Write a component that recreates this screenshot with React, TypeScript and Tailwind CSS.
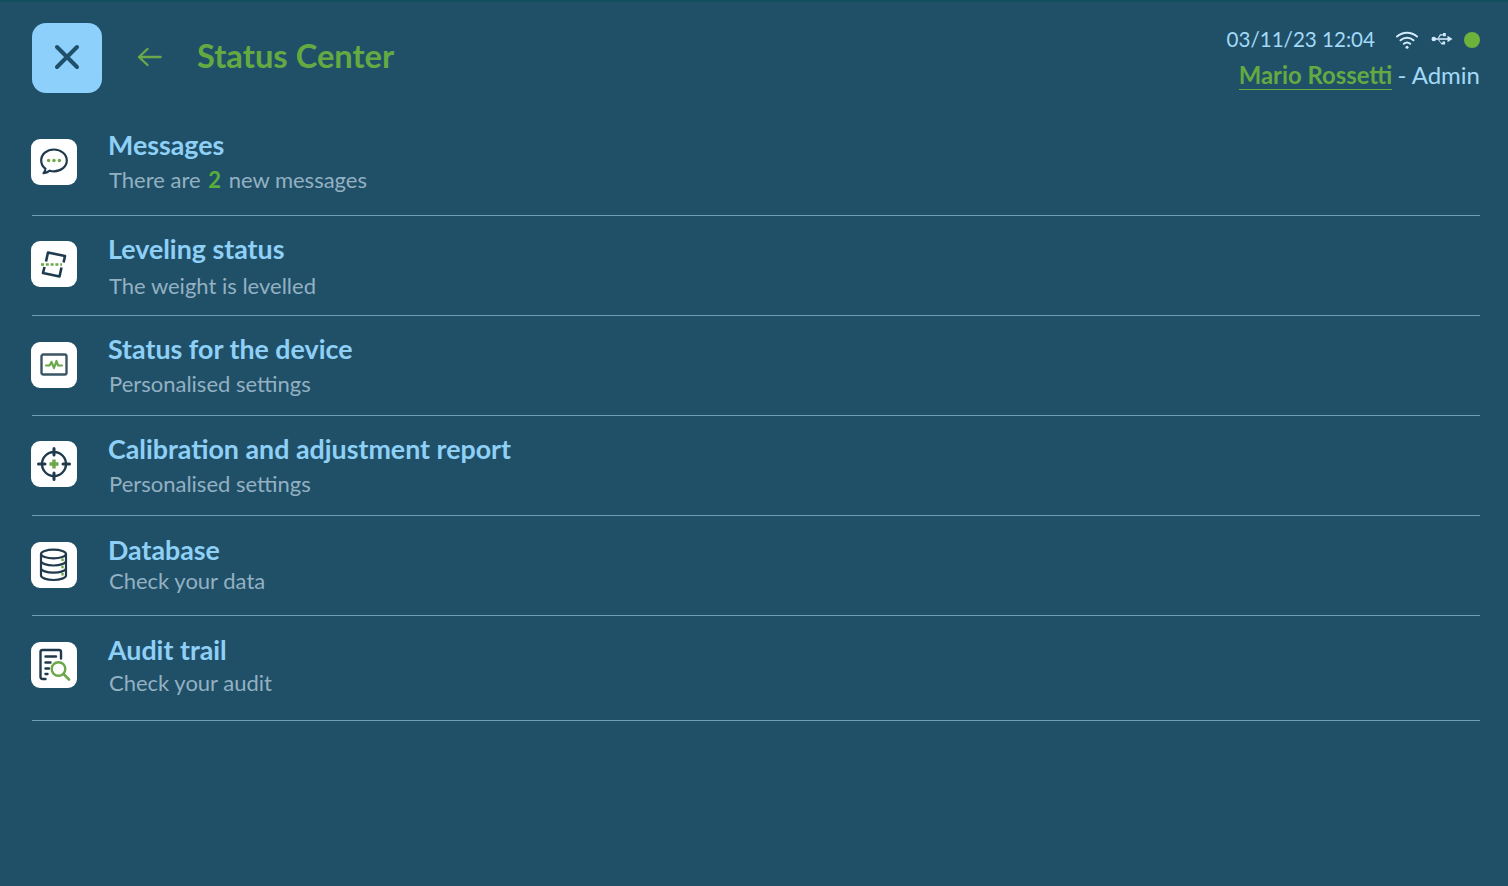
import React from 'react';

const LINE = '#1f3a4d';
const GREEN = '#6aa84a';

const IconChat = () => (
  <svg width="30" height="30" viewBox="0 0 30 30" fill="none">
    <path d="M15 2.500C7.800 2.500 2.200 7.300 2.200 13.500c0 3.300 1.600 6.200 4.200 8.200-.1 1.600-.8 3.200-1.900 4.500 2.500-.2 4.600-1.200 6.300-2.500 1.300.4 2.700.6 4.200.6 7.200 0 12.800-4.800 12.800-10.800S22.200 2.500 15 2.500z" stroke={LINE} strokeWidth="2.200" strokeLinejoin="round" />
    <circle cx="9.600" cy="13.500" r="1.700" fill={GREEN} />
    <circle cx="15" cy="13.500" r="1.700" fill={GREEN} />
    <circle cx="20.400" cy="13.500" r="1.700" fill={GREEN} />
  </svg>
);

const IconLevel = () => (
  <svg width="30" height="30" viewBox="0 0 30 30" fill="none">
    <path d="M7 12.500 9 3.500l17 3.500-1.400 6.500M5.500 18l-1.500 6 16.500 3.500 2-9" stroke={LINE} strokeWidth="2.600" strokeLinejoin="round" />
    <path d="M2 15.500h21" stroke={GREEN} strokeWidth="2.600" strokeDasharray="3 1.800" />
  </svg>
);

const IconMonitor = () => (
  <svg width="30" height="30" viewBox="0 0 30 30" fill="none">
    <rect x="2.500" y="4.500" width="25" height="20" rx="1.800" stroke="#3b5566" strokeWidth="2.400" />
    <path d="M7 15.500h3.500l2-3.500 2.500 6 2.500-7 1.500 4.500h4" stroke={GREEN} strokeWidth="2.200" strokeLinejoin="round" strokeLinecap="round" />
  </svg>
);

const IconTarget = () => (
  <svg width="36" height="36" viewBox="0 0 36 36" fill="none">
    <circle cx="18" cy="18" r="12" stroke={LINE} strokeWidth="2.400" />
    <path d="M18 2.500v6.500M18 27v6.500M2.500 18H9M27 18h6.500" stroke={LINE} strokeWidth="3" strokeLinecap="round" />
    <path d="M18 13.500v9M13.500 18h9" stroke={GREEN} strokeWidth="3.400" />
  </svg>
);

const IconDatabase = () => (
  <svg width="32" height="36" viewBox="0 0 32 36" fill="none">
    <ellipse cx="15.500" cy="7" rx="12.500" ry="4.300" stroke={LINE} strokeWidth="2.200" />
    <path d="M3 7v21.500c0 2.400 5.600 4.500 12.500 4.500S28 30.900 28 28.500V7M3 14c0 2.400 5.600 4.500 12.500 4.500S28 16.400 28 14M3 21.200c0 2.400 5.600 4.500 12.500 4.500S28 23.600 28 21.200" stroke={LINE} strokeWidth="2.200" />
    <path d="M24.500 11.500v2.500M24.500 18.700v2.500M24.500 26v2.500" stroke={GREEN} strokeWidth="2.400" />
  </svg>
);

const IconAudit = () => (
  <svg width="36" height="36" viewBox="0 0 36 36" fill="none">
    <path d="M9.500 32H6.500c-1.200 0-2-.8-2-2V5c0-1.200.8-2 2-2H23c1.200 0 2 .8 2 2v6.500" stroke={LINE} strokeWidth="2.400" strokeLinecap="round" />
    <path d="M9.500 9.500h10.500M9.500 15.500h5M9.500 21.500h3.500M9.500 27h2" stroke={LINE} strokeWidth="2.400" strokeLinecap="round" />
    <circle cx="22.500" cy="22" r="6.800" stroke={GREEN} strokeWidth="2.400" />
    <path d="m27.500 27 5.500 5.500" stroke={GREEN} strokeWidth="2.600" strokeLinecap="round" />
  </svg>
);

const IconWifi = () => (
  <svg width="24" height="20" viewBox="0 0 24 20" fill="none" stroke="#d3ecfb" strokeLinecap="round">
    <path d="M2 6.500c5.800-5 14.200-5 20 0" strokeWidth="2" />
    <path d="M5.500 10.300c3.800-3.300 9.200-3.300 13 0" strokeWidth="2" />
    <path d="M8.800 13.800c1.900-1.500 4.500-1.500 6.400 0" strokeWidth="2" />
    <circle cx="12" cy="17.300" r="1.500" fill="#d3ecfb" stroke="none" />
  </svg>
);

const IconUsb = () => (
  <svg width="22" height="14" viewBox="0 0 22 14" fill="#cfe9fa">
    <circle cx="2.800" cy="7" r="2.300" />
    <path d="M3 6.200h15v1.600H3z" />
    <path d="m16.500 3.800 5 3.200-5 3.200z" />
    <path d="M6.500 6.500 9 2.300h3V1h2.800v3.200H12V3.400H9.700L7.800 6.500zM8 7.500l2 3.200h1.500V9.500h2.600v3h-3.400L6.700 7.500z" />
  </svg>
);

interface RowProps {
  icon: React.ReactNode;
  title: string;
  sub: React.ReactNode;
  className: string;
  iconClass: string;
  textClass: string;
  subClass: string;
}

const Row: React.FC<RowProps> = ({ icon, title, sub, className, iconClass, textClass, subClass }) => (
  <div className={`flex items-start border-b border-[#6f9fb8] ${className}`}>
    <div className={`w-[46px] h-[46px] -ml-px bg-white rounded-[9px] flex items-center justify-center shrink-0 ${iconClass}`}>
      {icon}
    </div>
    <div className={`ml-[31px] ${textClass}`}>
      <div className="text-[26.800px] leading-[32px] font-bold text-[#8fd0f7]">{title}</div>
      <div className={`ml-px text-[22px] leading-[28px] text-[#93b1c2] ${subClass}`}>{sub}</div>
    </div>
  </div>
);

export default function App() {
  return (
    <div className="w-[1508px] h-[886px] bg-[#205068] overflow-hidden border-t-2 border-[#12505f]" style={{ fontFamily: "Lato, 'Open Sans', sans-serif" }}>
      <div className="px-[28px] pl-[32px]">
        {/* header */}
        <div className="flex items-start justify-between h-[114px]">
          <div className="flex items-center pt-[21px]">
            <div className="w-[70px] h-[70px] rounded-[14px] bg-[#8cd0fb] flex items-center justify-center">
              <svg className="mb-[2px]" width="26" height="26" viewBox="0 0 26 26" fill="none" stroke="#1f4f69" strokeWidth="4" strokeLinecap="round">
                <path d="M3 3l20 20M23 3 3 23" />
              </svg>
            </div>
            <svg className="ml-[35px] -mt-[2px]" width="25" height="20" viewBox="0 0 25 20" fill="none" stroke={GREEN} strokeWidth="2.400" strokeLinecap="round" strokeLinejoin="round">
              <path d="M23.500 10H2M10.500 2 2 10l8.500 8" />
            </svg>
            <div className="ml-[35px] text-[32.700px] leading-[40px] font-bold text-[#64aa42] -mt-[4px]">Status Center</div>
          </div>
          <div className="flex flex-col items-end pt-[23px]">
            <div className="flex items-center h-[28px]">
              <span className="text-[20.600px] text-[#a3d9f7]">03/11/23 12:04</span>
              <span className="ml-[20px] mt-[2px]"><IconWifi /></span>
              <span className="ml-[12px] mt-[-1px]"><IconUsb /></span>
              <span className="ml-[11px] mt-[1px] w-[16px] h-[16px] rounded-full bg-[#6cb23d]" />
            </div>
            <div className="text-[24px] leading-[32px] mt-[6px] text-[#a3d9f7]">
              <span className="font-bold text-[23.850px] text-[#64aa42] border-b border-[#64aa42] inline-block leading-[29px] -mr-px">Mario Rossetti</span>
              <span> - Admin</span>
            </div>
          </div>
        </div>

        {/* list */}
        <Row
          className="h-[100px]"
          iconClass="mt-[23px]"
          textClass="mt-[13px]"
          subClass="mt-[5px]"
          icon={<IconChat />}
          title="Messages"
          sub={<>There are <span className="font-bold text-[#58b03a] mx-[2px]">2</span> new messages</>}
        />
        <Row className="h-[100px]" iconClass="mt-[25px]" textClass="mt-[17px]" subClass="mt-[7px]" icon={<IconLevel />} title="Leveling status" sub="The weight is levelled" />
        <Row className="h-[100px]" iconClass="mt-[26px]" textClass="mt-[17px]" subClass="mt-[5px]" icon={<IconMonitor />} title="Status for the device" sub="Personalised settings" />
        <Row className="h-[100px]" iconClass="mt-[25px]" textClass="mt-[17px]" subClass="mt-[5px]" icon={<IconTarget />} title="Calibration and adjustment report" sub="Personalised settings" />
        <Row className="h-[100px]" iconClass="mt-[26px]" textClass="mt-[18px]" subClass="mt-[1px]" icon={<IconDatabase />} title="Database" sub="Check your data" />
        <Row className="h-[105px]" iconClass="mt-[26px]" textClass="mt-[18px]" subClass="mt-[3px]" icon={<IconAudit />} title="Audit trail" sub="Check your audit" />
      </div>
    </div>
  );
}
